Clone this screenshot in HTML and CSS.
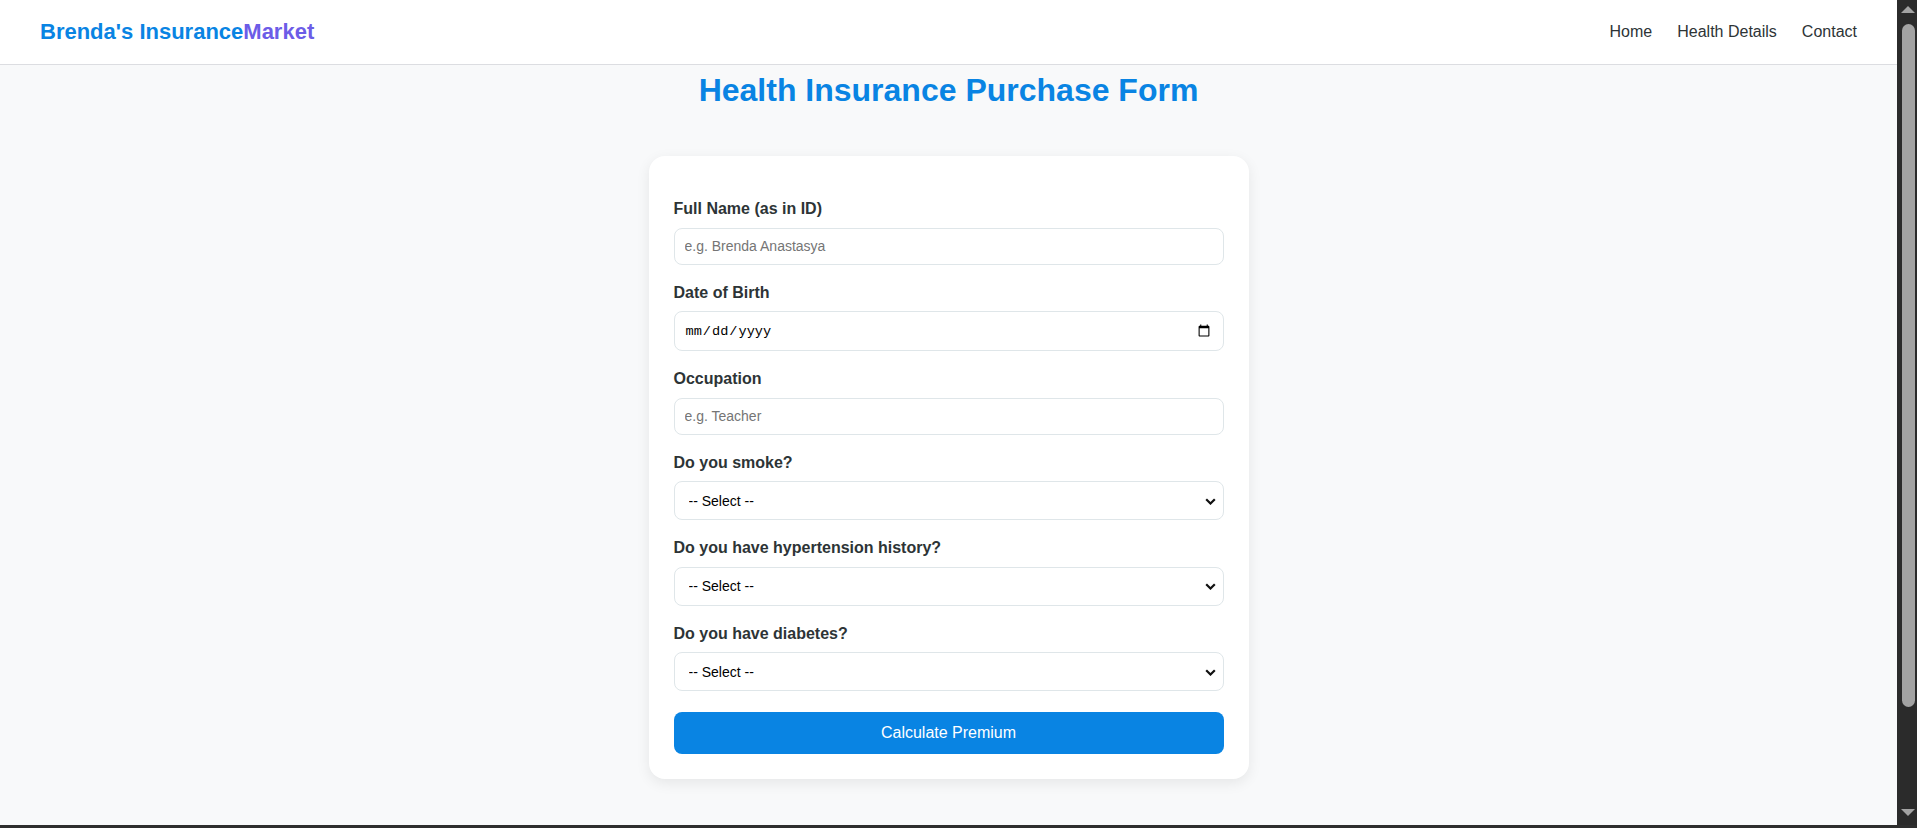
FILE: index.html
```html
<!DOCTYPE html>
<html lang="en">
<head>
<meta charset="utf-8">
<title>Brenda's InsuranceMarket - Health Insurance Purchase Form</title>
<link rel="stylesheet" href="styles.css">
</head>
<body>
<div class="screen">
  <div class="window">
    <div class="page">
      <header class="topbar">
        <div class="logo">Brenda's Insurance<span class="logo-accent">Market</span></div>
        <nav class="nav">
          <a href="#" class="nav-link">Home</a>
          <a href="#" class="nav-link">Health Details</a>
          <a href="#" class="nav-link">Contact</a>
        </nav>
      </header>
      <main class="main">
        <h1 class="title">Health Insurance Purchase Form</h1>
        <form class="card">
          <label class="field-label" for="fullname">Full Name (as in ID)</label>
          <input class="field field-text" id="fullname" type="text" placeholder="e.g. Brenda Anastasya">

          <label class="field-label" for="dob">Date of Birth</label>
          <input class="field field-date" id="dob" type="date">

          <label class="field-label" for="occupation">Occupation</label>
          <input class="field field-text" id="occupation" type="text" placeholder="e.g. Teacher">

          <label class="field-label" for="smoke">Do you smoke?</label>
          <div class="select-wrap">
            <select class="field field-select" id="smoke">
              <option>-- Select --</option>
              <option>Yes</option>
              <option>No</option>
            </select>
            <svg class="select-icon" viewBox="0 0 11 7" aria-hidden="true"><path d="M1.2 1.2 L5.5 5.5 L9.8 1.2" /></svg>
          </div>

          <label class="field-label" for="hypertension">Do you have hypertension history?</label>
          <div class="select-wrap">
            <select class="field field-select" id="hypertension">
              <option>-- Select --</option>
              <option>Yes</option>
              <option>No</option>
            </select>
            <svg class="select-icon" viewBox="0 0 11 7" aria-hidden="true"><path d="M1.2 1.2 L5.5 5.5 L9.8 1.2" /></svg>
          </div>

          <label class="field-label" for="diabetes">Do you have diabetes?</label>
          <div class="select-wrap">
            <select class="field field-select" id="diabetes">
              <option>-- Select --</option>
              <option>Yes</option>
              <option>No</option>
            </select>
            <svg class="select-icon" viewBox="0 0 11 7" aria-hidden="true"><path d="M1.2 1.2 L5.5 5.5 L9.8 1.2" /></svg>
          </div>

          <button class="submit" type="button">Calculate Premium</button>
        </form>
      </main>
    </div>
    <div class="scrollbar" aria-hidden="true">
      <span class="sb-arrow sb-up"></span>
      <span class="sb-thumb"></span>
      <span class="sb-arrow sb-down"></span>
    </div>
  </div>
  <div class="frame-bottom"></div>
</div>
</body>
</html>
```

FILE: styles.css
```css
html, body {
  margin: 0;
  padding: 0;
  height: 100%;
  overflow: hidden;
}

.screen {
  height: 100vh;
  display: flex;
  flex-direction: column;
}

.window {
  flex: 1;
  min-height: 0;
  display: flex;
}

.page {
  flex: 1;
  min-width: 0;
  overflow: hidden;
  background: #f8f9fa;
  font-family: "Liberation Sans", Arial, sans-serif;
  color: #2d3436;
}

.topbar {
  height: 64px;
  padding: 0 40px;
  background: #ffffff;
  border-bottom: 1px solid #dcdde1;
  display: flex;
  align-items: center;
  justify-content: space-between;
}

.logo {
  font-size: 22px;
  font-weight: bold;
  color: #0984e3;
}

.logo-accent {
  color: #6c5ce7;
}

.nav {
  display: flex;
  gap: 25px;
}

.nav-link {
  color: #2d3436;
  text-decoration: none;
  font-size: 16px;
}

.main {
  display: flex;
  flex-direction: column;
  align-items: center;
  padding-top: 7px;
}

.title {
  margin: 0 0 47px;
  font-size: 32px;
  font-weight: bold;
  color: #0984e3;
}

.card {
  width: 600px;
  box-sizing: border-box;
  padding: 25px 25px 25px;
  background: #ffffff;
  border-radius: 16px;
  box-shadow: 0 4px 14px rgba(0, 0, 0, 0.08);
  display: flex;
  flex-direction: column;
}

.field-label {
  display: block;
  margin: 19px 0 9.5px;
  font-size: 16px;
  font-weight: bold;
  color: #2d3436;
}

.field {
  display: block;
  width: 100%;
  box-sizing: border-box;
  margin: 0;
  padding: 0 10px;
  border: 1px solid #dfe6e9;
  border-radius: 8px;
  background: #ffffff;
  font-family: "Liberation Sans", Arial, sans-serif;
  font-size: 14px;
  color: #000000;
}

.field::placeholder {
  color: #757575;
}

.field-text {
  height: 37px;
}

.field-date {
  height: 40px;
  font-family: "Liberation Mono", "Courier New", monospace;
  font-size: 13.6px;
}

.select-wrap {
  position: relative;
}

.field-select {
  height: 39px;
  padding-left: 14px;
  padding-right: 28px;
  appearance: none;
  -webkit-appearance: none;
}

.select-icon {
  position: absolute;
  right: 8px;
  top: 50%;
  width: 11px;
  height: 7px;
  margin-top: -3px;
  pointer-events: none;
  fill: none;
  stroke: #111111;
  stroke-width: 2.2;
}

.submit {
  margin-top: 21px;
  padding: 12px;
  border: none;
  border-radius: 8px;
  background: #0984e3;
  color: #ffffff;
  font-family: "Liberation Sans", Arial, sans-serif;
  font-size: 16px;
}

.scrollbar {
  width: 20px;
  background: #2b2b2b;
  display: flex;
  flex-direction: column;
  padding: 6px 0 9px;
  box-sizing: border-box;
}

.sb-arrow {
  display: block;
  width: 0;
  height: 0;
  margin-left: 4px;
  border-left: 7px solid transparent;
  border-right: 7px solid transparent;
}

.sb-up {
  border-bottom: 7px solid #a3a3a3;
}

.sb-down {
  margin-top: auto;
  border-top: 7px solid #a3a3a3;
}

.sb-thumb {
  display: block;
  width: 13px;
  height: 683px;
  margin: 11px 0 0 5px;
  border-radius: 7px;
  background: #a3a3a3;
}

.frame-bottom {
  height: 3px;
  background: #2e2e2e;
}
```
